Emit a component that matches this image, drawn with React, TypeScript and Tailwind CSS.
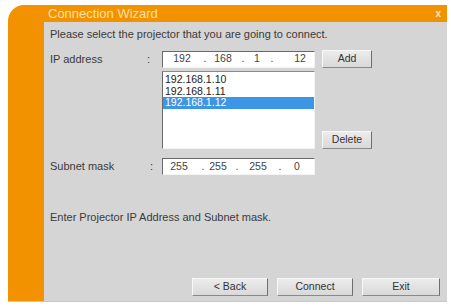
import React from "react";

const font = { fontFamily: '"Liberation Sans", Arial, sans-serif' };

type Seg = { w: string; t: string };

const ipSegs: Seg[] = [
  { w: "w-[38px]", t: "192" },
  { w: "w-[8px]", t: "." },
  { w: "w-[28px]", t: "168" },
  { w: "w-[12px]", t: "." },
  { w: "w-[16px]", t: "1" },
  { w: "w-[14px]", t: "." },
  { w: "w-[42px]", t: "12" },
];

const maskSegs: Seg[] = [
  { w: "w-[32px]", t: "255" },
  { w: "w-[16px]", t: "." },
  { w: "w-[14px]", t: "255" },
  { w: "w-[24px]", t: "." },
  { w: "w-[18px]", t: "255" },
  { w: "w-[26px]", t: "." },
  { w: "w-[8px]", t: "0" },
];

function IpBox({ segs }: { segs: Seg[] }) {
  return (
    <div className="flex h-[17px] w-[153px] items-center overflow-hidden border border-t-[#6a6a6a] border-l-[#6a6a6a] border-r-[#f4f4f4] border-b-[#f4f4f4] bg-white text-[10.5px] text-[#444]">
      {segs.map((s, i) => (
        <div key={i} className={`flex shrink-0 justify-center ${s.w}`}>
          {s.t}
        </div>
      ))}
    </div>
  );
}

function Btn({ label, className = "" }: { label: string; className?: string }) {
  return (
    <div
      className={`flex items-center justify-center border border-t-[#f8f8f8] border-l-[#f8f8f8] border-r-[#6e6e6e] border-b-[#8a8a8a] bg-gradient-to-b from-[#ececec] to-[#d9d9d9] text-[10.5px] text-[#333] ${className}`}
    >
      {label}
    </div>
  );
}

export default function App() {
  return (
    <div className="h-[306px] w-[451px] overflow-hidden bg-white pl-[8px] pt-[5px]" style={font}>
      <div className="flex h-[297px] w-[439px] flex-col rounded-tl-[16px] border-b border-b-[#c8c8c8] bg-[#f29200]">
        {/* Title bar */}
        <div className="flex h-[17px] items-center justify-between pl-[40px] pr-[6px]">
          <span className="text-[13px] leading-none text-[#fbe0a0]">Connection Wizard</span>
          <span className="text-[10px] font-bold leading-none text-[#fbe9c4]">x</span>
        </div>

        <div className="flex flex-1">
          <div className="w-[36px]" />
          {/* Body */}
          <div className="flex flex-1 flex-col bg-[#d5d5d5] pl-[6px] pr-[7px] pb-[5px] text-[11px] text-[#3a3a3a]">
            <div className="mt-[6px] leading-[12px]">
              Please select the projector that you are going to connect.
            </div>

            <div className="mt-[10px] flex items-center">
              <div className="w-[97px]">IP address</div>
              <div className="w-[15px]">:</div>
              <IpBox segs={ipSegs} />
              <Btn label="Add" className="ml-[7px] h-[18px] w-[50px]" />
            </div>

            <div className="mt-[3px] flex items-end pl-[112px]">
              <div className="h-[78px] w-[153px] border border-t-[#8a8a8a] border-l-[#6a6a6a] border-r-[#f4f4f4] border-b-[#f4f4f4] bg-white pt-[2px] text-[10.5px] leading-[11.5px] text-[#222]">
                <div className="pl-[2px]">192.168.1.10</div>
                <div className="pl-[2px]">192.168.1.11</div>
                <div className="bg-[#3d95e6] pl-[2px] text-white">192.168.1.12</div>
              </div>
              <Btn label="Delete" className="ml-[7px] h-[18px] w-[50px]" />
            </div>

            <div className="mt-[9px] flex items-center">
              <div className="w-[97px]">Subnet mask</div>
              <div className="w-[15px] pl-[3px]">:</div>
              <IpBox segs={maskSegs} />
            </div>

            <div className="mt-[36px] leading-[12px]">Enter Projector IP Address and Subnet mask.</div>

            <div className="flex-1" />

            <div className="flex justify-end gap-[9px]">
              <Btn label="< Back" className="h-[18px] w-[76px]" />
              <Btn label="Connect" className="h-[18px] w-[76px]" />
              <Btn label="Exit" className="h-[18px] w-[78px]" />
            </div>
          </div>
        </div>
      </div>
    </div>
  );
}
